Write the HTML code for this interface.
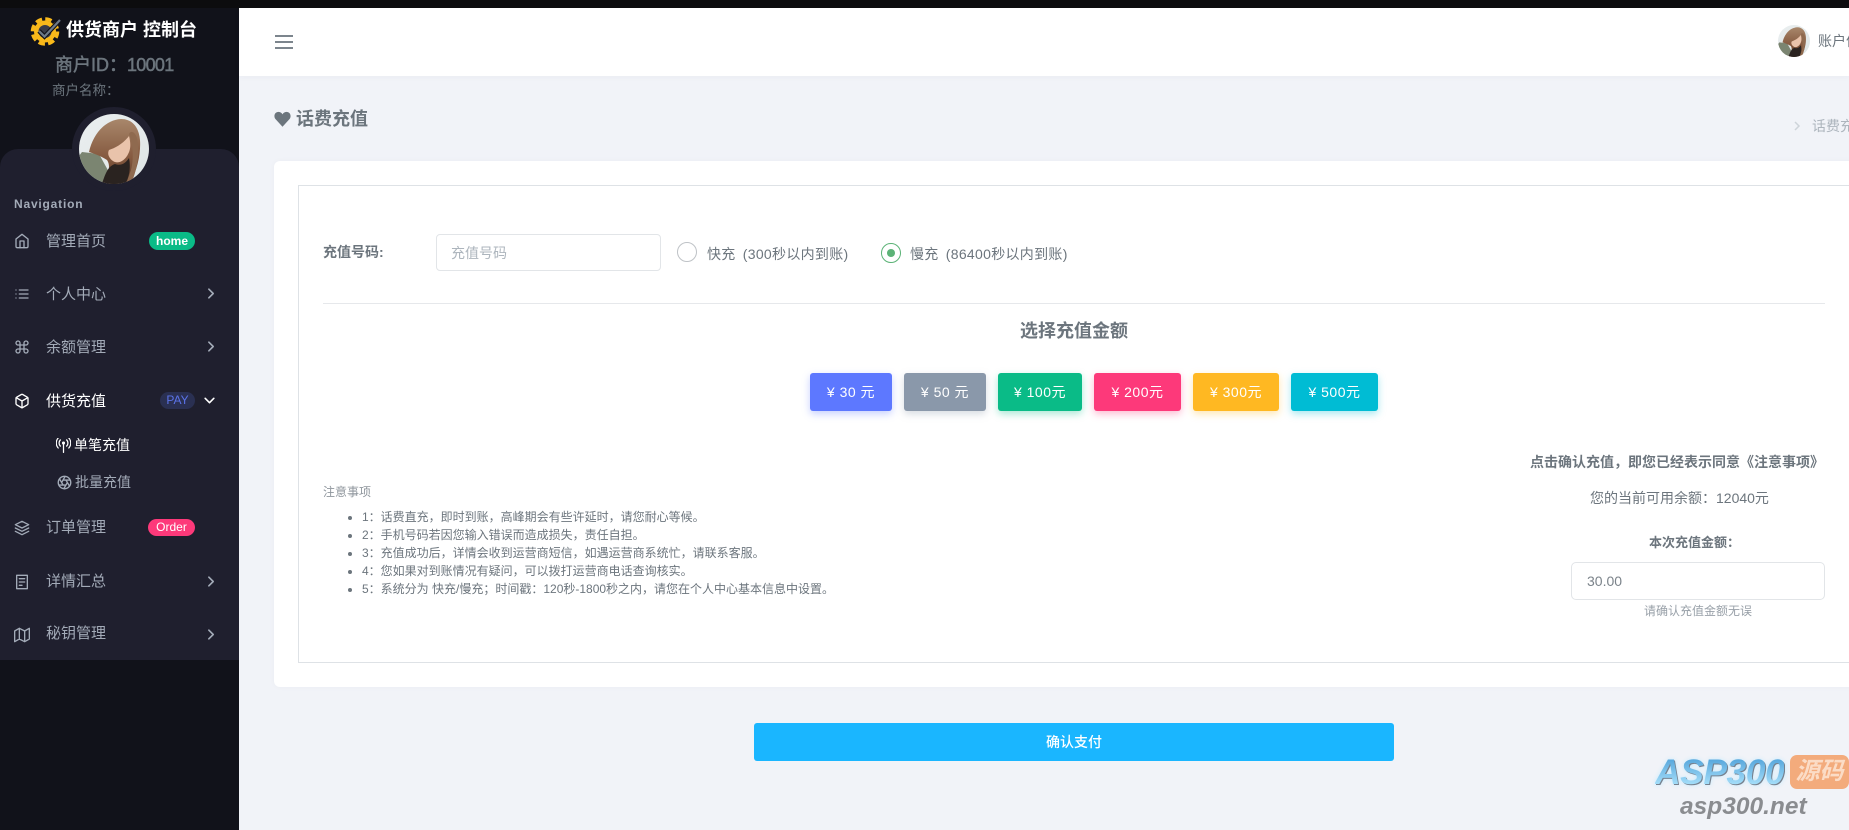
<!DOCTYPE html>
<html lang="zh-CN">
<head>
<meta charset="utf-8">
<title>话费充值</title>
<style>
*{box-sizing:border-box}
html,body{margin:0;padding:0;width:1849px;height:830px;overflow:hidden;background:#f1f3f8}
body{position:relative;font-family:"Liberation Sans","Noto Sans CJK SC",sans-serif;color:#6c757d;font-size:14px}
.a{position:absolute;white-space:nowrap}
.nav{left:46px;font-size:15px;line-height:22px;height:22px;color:#a3abb8}
.ic{position:absolute;left:14px;width:16px;height:16px;fill:none;stroke:#a3abb8;stroke-width:2;stroke-linecap:round;stroke-linejoin:round}
.ch{position:absolute;left:204px;width:13px;height:13px;fill:none;stroke:#a3abb8;stroke-width:3;stroke-linecap:round;stroke-linejoin:round}
.badge{position:absolute;border-radius:10px;font-size:12px;font-weight:700;text-align:center;color:#fff}
.btn{position:absolute;top:373px;height:38px;border-radius:3px;color:#fff;font-size:14px;line-height:38px;text-align:center;font-weight:400;letter-spacing:.5px}
li{height:18px;line-height:18px}
</style>
</head>
<body>
<svg width="0" height="0" style="position:absolute">
<defs>
<linearGradient id="bgg" x1="0" y1="0" x2="1" y2="1"><stop offset="0" stop-color="#eaeff0"/><stop offset="1" stop-color="#dfe5e5"/></linearGradient>
<linearGradient id="hair" x1="0" y1="0" x2="0" y2="1"><stop offset="0" stop-color="#a8876b"/><stop offset=".6" stop-color="#85593f"/><stop offset="1" stop-color="#5a3a28"/></linearGradient>
<clipPath id="cc"><circle cx="35" cy="35" r="35"/></clipPath>
<symbol id="av" viewBox="0 0 70 70">
<g clip-path="url(#cc)">
<rect width="70" height="70" fill="url(#bgg)"/>
<path d="M3 38L20 40L31 60L25 70H0V42Z" fill="#7b8571"/>
<path d="M10 38C14 20 26 6 42 5C54 5 60 14 61 26C62 40 58 58 50 70H22C30 60 32 52 28 46C22 42 16 40 10 38Z" fill="url(#hair)"/>
<path d="M50 22C52 30 52 36 48 42C44 48 38 50 34 47C30 44 28 40 30 36C36 34 44 30 50 22Z" fill="#e9c3ab"/>
<path d="M23 70C27 57 30 52 36 50C42 52 46 50 50 44C52 54 50 64 46 70Z" fill="#2a2320"/>
<path d="M50 20C54 30 55 44 52 56L47 70H52C58 56 61 40 58 24C56 18 52 16 50 20Z" fill="#8f6a4f"/>
</g>
</symbol>
</defs>
</svg>

<!-- sidebar -->
<div class="a" style="left:0;top:0;width:239px;height:830px;background:#11121a"></div>
<div class="a" style="left:0;top:149px;width:239px;height:511px;background:#1f1f2e;border-radius:18px 18px 0 0"></div>
<div class="a" style="left:72px;top:107px;width:84px;height:84px;border-radius:50%;background:#1f1f2e"></div>
<svg class="a" style="left:79px;top:114px" width="70" height="70"><use href="#av"/></svg>

<svg class="a" style="left:30px;top:16px" width="32" height="30" viewBox="0 0 32 30">
<circle cx="15" cy="15.500" r="11" fill="#f9b91a"/>
<circle cx="15" cy="15.500" r="12.500" fill="none" stroke="#f9b91a" stroke-width="3.500" stroke-dasharray="6.500 3.300"/>
<circle cx="15" cy="15.500" r="6.500" fill="#3a3c47"/>
<path d="M9 15l5.500 5.500L30 4" fill="none" stroke="#11121a" stroke-width="4.500"/>
<path d="M9 15l5.500 5.500L30 4" fill="none" stroke="#6d7a88" stroke-width="2.200"/>
</svg>
<div class="a" style="left:66px;top:18px;font-size:18px;line-height:24px;font-weight:700;color:#fff">供货商户 控制台</div>
<div class="a" style="left:55px;top:53px;font-size:18px;line-height:24px;color:#6c757d;-webkit-text-stroke:.5px #6c757d">商户ID&#xFF1A;<span style="letter-spacing:-.7px">10001</span></div>
<div class="a" style="left:52px;top:81px;font-size:13.500px;line-height:20px;color:#6c757d">商户名称&#xFF1A;</div>

<div class="a" style="left:14px;top:196px;font-size:12px;line-height:16px;font-weight:700;color:#a3abb8;letter-spacing:.8px">Navigation</div>

<svg class="ic" style="top:233px" viewBox="0 0 24 24"><path d="M3 9l9-7 9 7v11a2 2 0 0 1-2 2H5a2 2 0 0 1-2-2z"/><path d="M9 22V12h6v10"/></svg>
<div class="a nav" style="top:231px">管理首页</div>
<div class="badge" style="left:149px;top:232px;width:46px;height:18px;line-height:18px;background:#0abb87">home</div>

<svg class="ic" style="top:286px" viewBox="0 0 24 24"><path d="M8 6h13M8 12h13M8 18h13M3 6h.01M3 12h.01M3 18h.01"/></svg>
<div class="a nav" style="top:284px">个人中心</div>
<svg class="ch" style="top:287px" viewBox="0 0 24 24"><path d="M9 4l8 8-8 8"/></svg>

<svg class="ic" style="top:339px" viewBox="0 0 24 24"><path d="M18 3a3 3 0 0 0-3 3v12a3 3 0 0 0 3 3 3 3 0 0 0 3-3 3 3 0 0 0-3-3H6a3 3 0 0 0-3 3 3 3 0 0 0 3 3 3 3 0 0 0 3-3V6a3 3 0 0 0-3-3 3 3 0 0 0-3 3 3 3 0 0 0 3 3h12a3 3 0 0 0 3-3 3 3 0 0 0-3-3z"/></svg>
<div class="a nav" style="top:337px">余额管理</div>
<svg class="ch" style="top:340px" viewBox="0 0 24 24"><path d="M9 4l8 8-8 8"/></svg>

<svg class="ic" style="top:393px;stroke:#fff" viewBox="0 0 24 24"><path d="M21 16V8a2 2 0 0 0-1-1.730l-7-4a2 2 0 0 0-2 0l-7 4A2 2 0 0 0 3 8v8a2 2 0 0 0 1 1.730l7 4a2 2 0 0 0 2 0l7-4A2 2 0 0 0 21 16z"/><path d="M3.270 6.960L12 12.010l8.730-5.050M12 22.080V12"/></svg>
<div class="a nav" style="top:391px;color:#fff">供货充值</div>
<div class="badge" style="left:160px;top:392px;width:35px;height:17px;line-height:16px;background:#2a3052;color:#5b73e8;font-weight:400">PAY</div>
<svg class="ch" style="top:394px;left:203px;stroke:#fff" viewBox="0 0 24 24"><path d="M4 8l8 8 8-8"/></svg>

<svg class="a" style="left:56px;top:438px" width="15" height="15" viewBox="0 0 24 24" fill="none" stroke="#fff" stroke-width="2" stroke-linecap="round"><path d="M12 10v13" /><circle cx="12" cy="8" r="1.500" fill="#fff"/><path d="M7 13a7 7 0 0 1 0-10M17 13a7 7 0 0 0 0-10M3.500 16a12 12 0 0 1 0-16M20.500 16a12 12 0 0 0 0-16"/></svg>
<div class="a" style="left:74px;top:435px;font-size:14px;line-height:20px;color:#fff">单笔充值</div>
<svg class="a" style="left:57px;top:475px" width="15" height="15" viewBox="0 0 24 24" fill="none" stroke="#a3abb8" stroke-width="2.200"><circle cx="12" cy="12" r="10"/><path d="M14.300 8l5.740 9.940M9.700 8h11.480M7.380 12l5.740-9.940M9.700 16L3.960 6.060M14.300 16H2.830M16.620 12l-5.740 9.940"/></svg>
<div class="a" style="left:75px;top:472px;font-size:14px;line-height:20px;color:#a3abb8">批量充值</div>

<svg class="ic" style="top:520px" viewBox="0 0 24 24"><path d="M12 2L2 7l10 5 10-5-10-5zM2 17l10 5 10-5M2 12l10 5 10-5"/></svg>
<div class="a nav" style="top:517px">订单管理</div>
<div class="badge" style="left:148px;top:519px;width:47px;height:17px;line-height:17px;background:#fd397a;font-weight:400">Order</div>

<svg class="ic" style="top:574px" viewBox="0 0 24 24"><path d="M4 2h16v20H4zM8 7h8M8 12h8M8 17h4"/></svg>
<div class="a nav" style="top:571px">详情汇总</div>
<svg class="ch" style="top:575px" viewBox="0 0 24 24"><path d="M9 4l8 8-8 8"/></svg>

<svg class="ic" style="top:627px" viewBox="0 0 24 24"><path d="M1 6v16l7-4 8 4 7-4V2l-7 4-8-4-7 4zM8 2v16M16 6v16"/></svg>
<div class="a nav" style="top:623px">秘钥管理</div>
<svg class="ch" style="top:628px" viewBox="0 0 24 24"><path d="M9 4l8 8-8 8"/></svg>

<!-- top -->
<div class="a" style="left:239px;top:8px;width:1610px;height:68px;background:#fff;box-shadow:0 1px 6px rgba(40,50,80,.04)"></div>
<div class="a" style="left:0;top:0;width:1849px;height:8px;background:#0c0c0e"></div>
<div class="a" style="left:275px;top:35px;width:18px;height:2px;background:#7c858d"></div>
<div class="a" style="left:275px;top:41px;width:18px;height:2px;background:#7c858d"></div>
<div class="a" style="left:275px;top:47px;width:18px;height:2px;background:#7c858d"></div>
<svg class="a" style="left:1778px;top:25px" width="32" height="32"><use href="#av"/></svg>
<div class="a" style="left:1818px;top:31px;font-size:14px;line-height:20px;color:#6c757d">账户信息</div>

<!-- title -->
<svg class="a" style="left:274px;top:110px" width="17" height="18" viewBox="0 0 24 24"><path d="M12 23L2 12C-1 8 1 2 6.500 2C9 2 11 3.500 12 5.500C13 3.500 15 2 17.500 2C23 2 25 8 22 12Z" fill="#6c757d"/></svg>
<div class="a" style="left:296px;top:106px;font-size:18px;line-height:26px;font-weight:700;color:#6c757d">话费充值</div>
<svg class="a" style="left:1793px;top:120px" width="8" height="12" viewBox="0 0 8 12" fill="none" stroke="#ced4da" stroke-width="1.500"><path d="M2 2l4 4-4 4"/></svg>
<div class="a" style="left:1812px;top:116px;font-size:14px;line-height:20px;color:#adb5bd">话费充值</div>

<!-- card -->
<div class="a" style="left:274px;top:161px;width:1600px;height:526px;background:#fff;border-radius:6px;box-shadow:0 0 6px rgba(40,50,80,.03)"></div>
<div class="a" style="left:298px;top:185px;width:1600px;height:478px;border:1px solid #dee2e6"></div>

<div class="a" style="left:323px;top:242px;font-size:14px;line-height:20px;font-weight:700;color:#6c757d">充值号码:</div>
<div class="a" style="left:436px;top:234px;width:225px;height:37px;border:1px solid #e2e5e8;border-radius:4px;font-size:14px;line-height:37px;padding-left:14px;color:#adb5bd">充值号码</div>
<div class="a" style="left:677px;top:242px;width:20px;height:20px;border:1.500px solid #bfc3c7;border-radius:50%"></div>
<div class="a" style="left:707px;top:244px;font-size:14px;line-height:20px;color:#6c757d;letter-spacing:.3px">快充&nbsp;<span style="margin-left:3px">(300</span>秒以内到账)</div>
<div class="a" style="left:881px;top:243px;width:20px;height:20px;border:1.500px solid #5cb377;border-radius:50%"></div>
<div class="a" style="left:887px;top:249px;width:8px;height:8px;background:#5cb377;border-radius:50%"></div>
<div class="a" style="left:910px;top:244px;font-size:14px;line-height:20px;color:#6c757d;letter-spacing:.3px">慢充&nbsp;<span style="margin-left:3px">(86400</span>秒以内到账)</div>

<div class="a" style="left:323px;top:303px;width:1502px;height:1px;background:#e6e8eb"></div>
<div class="a" style="left:1020px;top:318px;font-size:18px;line-height:26px;font-weight:700;color:#6c757d">选择充值金额</div>

<div class="btn" style="left:810px;width:82px;background:#5d78ff;box-shadow:0 3px 8px rgba(93,120,255,.35)">¥ 30 元</div>
<div class="btn" style="left:904px;width:82px;background:#8a98aa;box-shadow:0 3px 8px rgba(138,152,170,.35)">¥ 50 元</div>
<div class="btn" style="left:998px;width:84px;background:#0abb87;box-shadow:0 3px 8px rgba(10,187,135,.35)">¥ 100元</div>
<div class="btn" style="left:1094px;width:87px;background:#fd397a;box-shadow:0 3px 8px rgba(253,57,122,.35)">¥ 200元</div>
<div class="btn" style="left:1193px;width:86px;background:#ffb822;box-shadow:0 3px 8px rgba(255,184,34,.35)">¥ 300元</div>
<div class="btn" style="left:1291px;width:87px;background:#00bcd4;box-shadow:0 3px 8px rgba(0,188,212,.35)">¥ 500元</div>

<div class="a" style="left:323px;top:483px;font-size:12px;line-height:18px;color:#8f969d">注意事项</div>
<ul class="a" style="left:323px;top:508px;margin:0;padding:0 0 0 39px;font-size:12px;color:#6c757d">
<li>1&#xFF1A;话费直充&#xFF0C;即时到账&#xFF0C;高峰期会有些许延时&#xFF0C;请您耐心等候。</li>
<li>2&#xFF1A;手机号码若因您输入错误而造成损失&#xFF0C;责任自担。</li>
<li>3&#xFF1A;充值成功后&#xFF0C;详情会收到运营商短信&#xFF0C;如遇运营商系统忙&#xFF0C;请联系客服。</li>
<li>4&#xFF1A;您如果对到账情况有疑问&#xFF0C;可以拨打运营商电话查询核实。</li>
<li>5&#xFF1A;系统分为 快充/慢充&#xFF1B;时间戳&#xFF1A;120秒-1800秒之内&#xFF0C;请您在个人中心基本信息中设置。</li>
</ul>

<div class="a" style="left:1530px;top:452px;font-size:14px;line-height:20px;font-weight:700;color:#6c757d">点击确认充值&#xFF0C;即您已经表示同意《注意事项》</div>
<div class="a" style="left:1590px;top:488px;font-size:14px;line-height:20px;color:#6c757d">您的当前可用余额&#xFF1A;12040元</div>
<div class="a" style="left:1649px;top:533px;font-size:13px;line-height:20px;font-weight:700;color:#6c757d">本次充值金额&#xFF1A;</div>
<div class="a" style="left:1571px;top:562px;width:254px;height:38px;border:1px solid #e2e5e8;border-radius:5px;font-size:14px;line-height:36px;padding-left:15px;color:#7b838a">30.00</div>
<div class="a" style="left:1644px;top:602px;font-size:12px;line-height:18px;color:#98a0a8">请确认充值金额无误</div>

<div class="a" style="left:754px;top:723px;width:640px;height:38px;border-radius:3px;background:#1ab6ff;color:#fff;font-size:14px;line-height:38px;text-align:center;font-weight:500">确认支付</div>

<!-- watermark -->
<div class="a" style="left:1655px;top:752px;font-size:35.500px;line-height:40px;font-weight:700;font-style:italic;letter-spacing:-.5px;color:transparent;background:linear-gradient(#5aa9dd 20%,#a9e1fb 85%);-webkit-background-clip:text;background-clip:text;filter:drop-shadow(1px 1px 0 #77818e) drop-shadow(0 0 2px #c4ebff)">ASP300</div>
<div class="a" style="left:1790px;top:755px;width:59px;height:34px;background:#f3ab7c;border-radius:7px;color:#fbdcc6;font-size:24px;line-height:33px;font-weight:700;font-style:italic;text-align:center">源码</div>
<div class="a" style="left:1680px;top:792px;font-size:24.500px;line-height:30px;font-weight:700;font-style:italic;color:#8a8c90">asp300.net</div>
</body>
</html>
